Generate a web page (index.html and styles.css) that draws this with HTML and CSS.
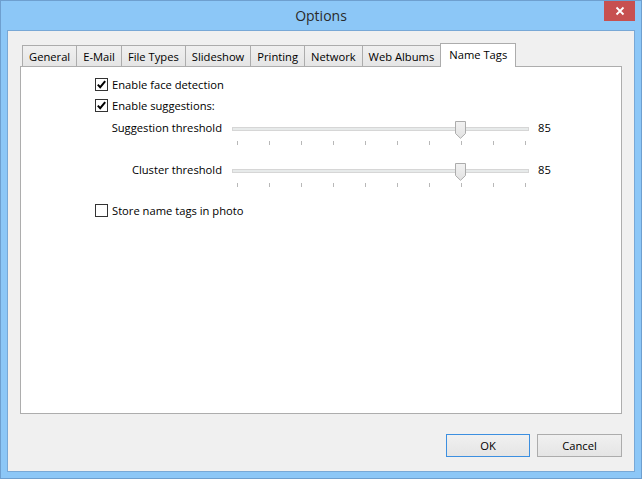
FILE: index.html
```html
<!DOCTYPE html>
<html>
<head>
<meta charset="utf-8">
<title>Options</title>
<link rel="stylesheet" href="styles.css">
</head>
<body>
<div class="window">
  <div class="titlebar">
    <span class="title">Options</span>
    <div class="close">
      <svg width="10" height="10" viewBox="0 0 10 10"><path d="M1.5 1.5 L8.5 8.5 M8.5 1.5 L1.5 8.5" stroke="#fff" stroke-width="1.8" fill="none"/></svg>
    </div>
  </div>
  <div class="client">
    <div class="tabs">
      <div class="tab">General</div>
      <div class="tab">E-Mail</div>
      <div class="tab">File Types</div>
      <div class="tab">Slideshow</div>
      <div class="tab">Printing</div>
      <div class="tab">Network</div>
      <div class="tab">Web Albums</div>
      <div class="tab active">Name Tags</div>
    </div>
    <div class="pane">
      <div class="check-row">
        <svg class="cb" width="13" height="13" viewBox="0 0 13 13"><rect x="0.5" y="0.5" width="12" height="12" fill="#fff" stroke="#333"/><path d="M2.8 6.6 L5.2 9.2 L10.2 3.2" stroke="#000" stroke-width="2" fill="none"/></svg>
        <span>Enable face detection</span>
      </div>
      <div class="check-row">
        <svg class="cb" width="13" height="13" viewBox="0 0 13 13"><rect x="0.5" y="0.5" width="12" height="12" fill="#fff" stroke="#333"/><path d="M2.8 6.6 L5.2 9.2 L10.2 3.2" stroke="#000" stroke-width="2" fill="none"/></svg>
        <span>Enable suggestions:</span>
      </div>
      <div class="slider-row">
        <div class="slider-label">Suggestion threshold</div>
        <div class="slider">
          <div class="track"></div>
          <div class="ticks"></div>
          <svg class="thumb" style="left:223px" width="11" height="18" viewBox="0 0 11 18"><defs><linearGradient id="tg1" x1="0" y1="0" x2="0" y2="1"><stop offset="0" stop-color="#f2f2f2"/><stop offset="1" stop-color="#e2e2e2"/></linearGradient></defs><path d="M0.5 0.5 H10.5 V12.5 L5.5 17.3 L0.5 12.5 Z" fill="url(#tg1)" stroke="#acacac"/></svg>
        </div>
        <div class="slider-value">85</div>
      </div>
      <div class="slider-row">
        <div class="slider-label">Cluster threshold</div>
        <div class="slider">
          <div class="track"></div>
          <div class="ticks"></div>
          <svg class="thumb" style="left:223px" width="11" height="18" viewBox="0 0 11 18"><defs><linearGradient id="tg2" x1="0" y1="0" x2="0" y2="1"><stop offset="0" stop-color="#f2f2f2"/><stop offset="1" stop-color="#e2e2e2"/></linearGradient></defs><path d="M0.5 0.5 H10.5 V12.5 L5.5 17.3 L0.5 12.5 Z" fill="url(#tg2)" stroke="#acacac"/></svg>
        </div>
        <div class="slider-value">85</div>
      </div>
      <div class="check-row store">
        <svg class="cb" width="13" height="13" viewBox="0 0 13 13"><rect x="0.5" y="0.5" width="12" height="12" fill="#fff" stroke="#333"/></svg>
        <span>Store name tags in photo</span>
      </div>
    </div>
    <div class="buttons">
      <div class="btn default">OK</div>
      <div class="btn cancel">Cancel</div>
    </div>
  </div>
</div>
</body>
</html>
```
FILE: styles.css
```css
html, body {
  margin: 0;
  padding: 0;
}
body {
  width: 642px;
  height: 479px;
  overflow: hidden;
  font-family: "Open Sans", "Noto Sans", sans-serif;
  font-size: 11.2px;
  color: #000;
}
.window {
  position: relative;
  box-sizing: border-box;
  width: 642px;
  height: 479px;
  border: 1px solid #6e9fcf;
  background: #8cc7f7;
  padding: 0 6px 6px 6px;
  display: flex;
  flex-direction: column;
}
.titlebar {
  height: 29px;
  display: flex;
  align-items: center;
  justify-content: center;
}
.title {
  font-size: 14px;
  color: #2a2a2a;
  margin-top: -1px;
}
.close {
  position: absolute;
  top: 0;
  right: 6px;
  width: 31px;
  height: 20px;
  background: #c75050;
  display: flex;
  align-items: center;
  justify-content: center;
}
.client {
  flex: 1;
  background: #f0f0f0;
  border: 1px solid #78a8d6;
  display: flex;
  flex-direction: column;
  padding: 12px 12px 0 12px;
}
.tabs {
  display: flex;
  align-items: flex-end;
  height: 23px;
  padding-left: 2px;
  position: relative;
  z-index: 1;
}
.tab {
  box-sizing: border-box;
  height: 21px;
  padding: 0 6px;
  margin-left: -1px;
  border: 1px solid #acacac;
  border-bottom: none;
  background: linear-gradient(#f0f0f0, #e5e5e5);
  line-height: 21px;
  white-space: nowrap;
}
.tab:first-child {
  margin-left: 0;
}
.tab.active {
  height: 24px;
  margin-bottom: -1px;
  background: #fff;
  padding: 0 8px;
  line-height: 21px;
}
.pane {
  box-sizing: border-box;
  height: 348px;
  background: #fff;
  border: 1px solid #adadad;
  padding: 7px 0 0 74px;
  display: flex;
  flex-direction: column;
}
.check-row {
  height: 21px;
  display: flex;
  align-items: center;
  gap: 4px;
}
.check-row.store {
  margin-top: -1px;
}
.cb {
  flex: none;
  display: block;
}
.slider-row {
  height: 42px;
  margin-top: 1px;
  display: flex;
  align-items: flex-start;
}
.slider-row + .slider-row {
  margin-top: 0;
}
.slider-label {
  width: 127px;
  text-align: right;
  line-height: 22px;
  white-space: nowrap;
}
.slider {
  position: relative;
  width: 297px;
  margin-left: 10px;
}
.track {
  box-sizing: border-box;
  margin-top: 10px;
  height: 4px;
  border: 1px solid #d6d6d6;
  background: #e7eaea;
}
.ticks {
  margin-top: 10px;
  margin-left: 5px;
  width: 290px;
  height: 4px;
  background: repeating-linear-gradient(to right, #b8b8b8 0 1px, transparent 1px 32px);
}
.thumb {
  position: absolute;
  top: 4px;
  display: block;
}
.slider-value {
  margin-left: 9px;
  line-height: 22px;
}
.buttons {
  display: flex;
  justify-content: flex-end;
  gap: 7px;
  margin-top: 20px;
}
.btn {
  box-sizing: border-box;
  height: 23px;
  border: 1px solid #acacac;
  background: linear-gradient(#f0f0f0, #e5e5e5);
  display: flex;
  align-items: center;
  justify-content: center;
}
.btn.default {
  width: 84px;
  border-color: #3c8fe0;
}
.btn.cancel {
  width: 85px;
}
```
